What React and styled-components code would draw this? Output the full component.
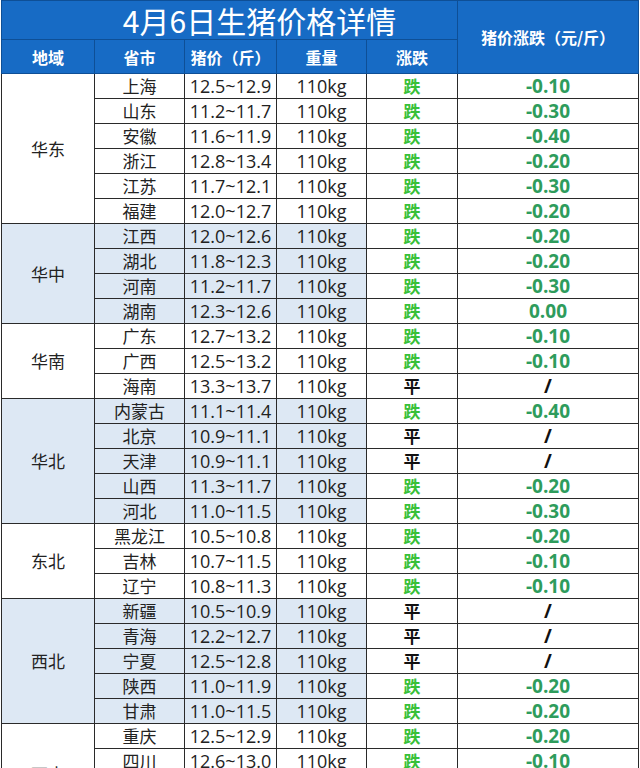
import React from "react";
import styled, { createGlobalStyle } from "styled-components";

const GlobalStyle = createGlobalStyle`
  html, body {
    margin: 0;
    padding: 0;
    background: #ffffff;
  }
  body {
    font-family: "Open Sans", "Noto Sans CJK SC", sans-serif;
    color: #222;
  }
`;

const Page = styled.div`
  padding: 0 2px 0 1px;
`;

const Table = styled.table`
  width: 637px;
  border-collapse: collapse;
  table-layout: fixed;
`;

const TitleCell = styled.th`
  height: 38px;
  padding: 0 0 0 60px;
  background: #176bc5;
  color: #fff;
  font-family: "Noto Sans CJK SC", sans-serif;
  font-size: 30px;
  font-weight: 400;
  line-height: 38px;
  border: 1px solid #0e4f96;
  letter-spacing: 0px;
`;

const HeadCell = styled.th`
  height: 33px;
  padding: 0;
  background: #176bc5;
  color: #fff;
  font-family: "Noto Sans CJK SC", sans-serif;
  font-size: ${(p) => (p.$big ? "16px" : "16px")};
  font-weight: 700;
  border: 1px solid #0e4f96;
  white-space: nowrap;
`;

const Row = styled.tr`
  height: 25px;
`;

const Cell = styled.td`
  padding: 0;
  height: 24px;
  text-align: center;
  border: 1px solid #2a2a2a;
  background: ${(p) => (p.$shade ? "#dde8f4" : "#fff")};
  font-size: 17px;
  line-height: 22px;
  color: #222;
  white-space: nowrap;
`;

const RegionCell = styled(Cell)`
  font-family: "Noto Sans CJK SC", sans-serif;
  font-size: 17px;
`;

const ProvCell = styled(Cell)`
  font-family: "Noto Sans CJK SC", sans-serif;
  font-size: 17px;
`;

const NumCell = styled(Cell)`
  font-family: "Open Sans", sans-serif;
  font-size: 18px;
`;

const TrendCell = styled(Cell)`
  font-family: "Noto Sans CJK SC", sans-serif;
  font-size: 17px;
  font-weight: 700;
  color: ${(p) => (p.$flat ? "#111" : "#38c038")};
`;

const ChangeCell = styled(Cell)`
  font-family: "Open Sans", sans-serif;
  font-size: 19px;
  font-weight: 700;
  color: ${(p) => (p.$flat ? "#111" : "#2e9c5c")};
`;

const groups = [
  {
    name: "华东",
    shade: false,
    rows: [
      ["上海", "12.5~12.9", "-0.10"],
      ["山东", "11.2~11.7", "-0.30"],
      ["安徽", "11.6~11.9", "-0.40"],
      ["浙江", "12.8~13.4", "-0.20"],
      ["江苏", "11.7~12.1", "-0.30"],
      ["福建", "12.0~12.7", "-0.20"],
    ],
  },
  {
    name: "华中",
    shade: true,
    rows: [
      ["江西", "12.0~12.6", "-0.20"],
      ["湖北", "11.8~12.3", "-0.20"],
      ["河南", "11.2~11.7", "-0.30"],
      ["湖南", "12.3~12.6", "0.00"],
    ],
  },
  {
    name: "华南",
    shade: false,
    rows: [
      ["广东", "12.7~13.2", "-0.10"],
      ["广西", "12.5~13.2", "-0.10"],
      ["海南", "13.3~13.7", null],
    ],
  },
  {
    name: "华北",
    shade: true,
    rows: [
      ["内蒙古", "11.1~11.4", "-0.40"],
      ["北京", "10.9~11.1", null],
      ["天津", "10.9~11.1", null],
      ["山西", "11.3~11.7", "-0.20"],
      ["河北", "11.0~11.5", "-0.30"],
    ],
  },
  {
    name: "东北",
    shade: false,
    rows: [
      ["黑龙江", "10.5~10.8", "-0.20"],
      ["吉林", "10.7~11.5", "-0.10"],
      ["辽宁", "10.8~11.3", "-0.10"],
    ],
  },
  {
    name: "西北",
    shade: true,
    rows: [
      ["新疆", "10.5~10.9", null],
      ["青海", "12.2~12.7", null],
      ["宁夏", "12.5~12.8", null],
      ["陕西", "11.0~11.9", "-0.20"],
      ["甘肃", "11.0~11.5", "-0.20"],
    ],
  },
  {
    name: "西南",
    shade: false,
    rows: [
      ["重庆", "12.5~12.9", "-0.20"],
      ["四川", "12.6~13.0", "-0.10"],
      ["贵州", "12.3~12.8", "-0.10"],
      ["云南", "11.9~12.4", "-0.20"],
    ],
  },
];

export default function App() {
  return (
    <Page>
      <GlobalStyle />
      <Table>
        <colgroup>
          <col style={{ width: 93 }} />
          <col style={{ width: 90 }} />
          <col style={{ width: 92 }} />
          <col style={{ width: 90 }} />
          <col style={{ width: 91 }} />
          <col style={{ width: 181 }} />
        </colgroup>
        <thead>
          <tr>
            <TitleCell colSpan={5}>4月6日生猪价格详情</TitleCell>
            <HeadCell rowSpan={2} $big>猪价涨跌（元/斤）</HeadCell>
          </tr>
          <tr>
            <HeadCell>地域</HeadCell>
            <HeadCell>省市</HeadCell>
            <HeadCell>猪价（斤）</HeadCell>
            <HeadCell>重量</HeadCell>
            <HeadCell>涨跌</HeadCell>
          </tr>
        </thead>
        <tbody>
          {groups.map((g) =>
            g.rows.map(([prov, price, change], i) => (
              <Row key={g.name + prov}>
                {i === 0 && (
                  <RegionCell rowSpan={g.rows.length} $shade={g.shade}>
                    {g.name}
                  </RegionCell>
                )}
                <ProvCell $shade={g.shade}>{prov}</ProvCell>
                <NumCell $shade={g.shade}>{price}</NumCell>
                <NumCell $shade={g.shade}>110kg</NumCell>
                <TrendCell $flat={!change}>{change ? "跌" : "平"}</TrendCell>
                <ChangeCell $flat={!change}>{change || "/"}</ChangeCell>
              </Row>
            ))
          )}
        </tbody>
      </Table>
    </Page>
  );
}
